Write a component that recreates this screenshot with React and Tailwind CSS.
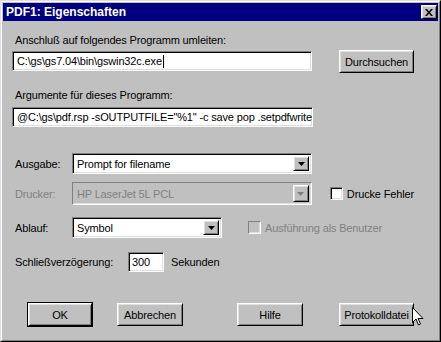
const sunken =
  "border border-t-[#808080] border-l-[#808080] border-r-white border-b-white shadow-[inset_1px_1px_0_#000,inset_-1px_-1px_0_#dfdfdf]";
const sunkenOff =
  "border border-t-[#808080] border-l-[#808080] border-r-white border-b-white shadow-[inset_1px_1px_0_#c0c0c0,inset_-1px_-1px_0_#dfdfdf]";
const raised =
  "border border-t-white border-l-white border-r-black border-b-black shadow-[inset_1px_1px_0_#dfdfdf,inset_-1px_-1px_0_#808080]";

function Arrow({ off }) {
  return (
    <div className={["h-full w-[16px] flex items-center justify-center bg-[#c0c0c0]", raised].join(" ")}>
      <svg width="7" height="4" viewBox="0 0 7 4">
        <path d="M0 0h7L3.5 4z" fill={off ? "#808080" : "#000"} />
      </svg>
    </div>
  );
}

function Select({ value, w, h, off }) {
  return (
    <div
      className={["flex items-stretch p-[2px]", off ? sunkenOff + " bg-[#c0c0c0]" : sunken + " bg-white", w, h].join(" ")}
    >
      <div className={["flex-1 flex items-center pl-[2px] whitespace-nowrap", off ? "text-[#808080]" : ""].join(" ")}>
        {value}
      </div>
      <Arrow off={off} />
    </div>
  );
}

function Check({ label, off }) {
  return (
    <div className="flex items-center whitespace-nowrap">
      <div className={["w-[13px] h-[13px]", off ? sunkenOff + " bg-[#c0c0c0]" : sunken + " bg-white"].join(" ")} />
      <span className={["ml-[4px]", off ? "text-[#808080]" : ""].join(" ")}>{label}</span>
    </div>
  );
}

function Btn({ children, w = "w-[66px]" }) {
  return (
    <div className={["h-[23px] flex items-center justify-center bg-[#c0c0c0]", raised, w].join(" ")}>
      {children}
    </div>
  );
}

export default function App() {
  return (
    <div className="relative w-[441px] h-[342px] overflow-hidden bg-[#c0c0c0] font-['Liberation_Sans',Arial,sans-serif] text-[11px] tracking-[-0.15px] leading-[14px] text-black border border-t-[#dfdfdf] border-l-[#dfdfdf] border-r-black border-b-black">
      <div className="h-full flex flex-col p-px border border-t-white border-l-white border-r-[#808080] border-b-[#808080]">
        {/* title bar */}
        <div className="h-[18px] bg-[#000080] flex items-center justify-between pl-[3px] pr-px">
          <span className="text-white font-bold text-[12px] tracking-normal leading-[16px]">PDF1: Eigenschaften</span>
          <div className={["w-[16px] h-[14px] flex items-center justify-center bg-[#c0c0c0]", raised].join(" ")}>
            <svg width="8" height="7" viewBox="0 0 8 7">
              <path d="M0 0h2l2 2.5L6 0h2L5 3.5 8 7H6L4 4.5 2 7H0l3-3.5z" fill="#000" />
            </svg>
          </div>
        </div>

        {/* body */}
        <div className="flex-1 flex flex-col pl-[9px] pr-[24px]">
          <div className="mt-[12px] ml-[3px]">Anschluß auf folgendes Programm umleiten:</div>
          <div className="mt-[3px] flex items-start">
            <div className={["mt-px h-[20px] w-[300px] bg-white flex items-center pl-[4px] whitespace-nowrap", sunken].join(" ")}>
              C:\gs\gs7.04\bin\gswin32c.exe
              <span className="ml-px w-px h-[13px] bg-black" />
            </div>
            <div className="ml-auto">
              <Btn w="w-[75px]">Durchsuchen</Btn>
            </div>
          </div>

          <div className="mt-[15px] ml-[3px]">Argumente für dieses Programm:</div>
          <div className={["mt-[5px] h-[20px] w-[301px] bg-white flex items-center pl-[4px] whitespace-nowrap overflow-hidden", sunken].join(" ")}>
            @C:\gs\pdf.rsp -sOUTPUTFILE="%1" -c save pop .setpdfwrite
          </div>

          <div className="mt-[26px] flex items-center">
            <span className="ml-[3px] w-[57px]">Ausgabe:</span>
            <Select value="Prompt for filename" w="w-[240px]" h="h-[21px]" />
          </div>

          <div className="mt-[8px] flex items-center">
            <span className="ml-[3px] w-[57px] text-[#808080]">Drucker:</span>
            <Select value="HP LaserJet 5L PCL" w="w-[240px]" h="h-[23px]" off />
            <div className="ml-[18px]">
              <Check label="Drucke Fehler" />
            </div>
          </div>

          <div className="mt-[12px] flex items-center">
            <span className="ml-[3px] w-[57px]">Ablauf:</span>
            <Select value="Symbol" w="w-[150px]" h="h-[21px]" />
            <div className="ml-[26px]">
              <Check label="Ausführung als Benutzer" off />
            </div>
          </div>

          <div className="mt-[14px] flex items-center">
            <span className="ml-[3px] w-[113px]">Schließverzögerung:</span>
            <div className={["h-[20px] w-[36px] bg-white flex items-center pl-[3px]", sunken].join(" ")}>300</div>
            <span className="ml-[7px]">Sekunden</span>
          </div>

          <div className="mt-[30px] flex items-center">
            <div className="ml-[15px] border border-black">
              <Btn w="w-[64px] h-[21px]">OK</Btn>
            </div>
            <div className="ml-[24px]">
              <Btn>Abbrechen</Btn>
            </div>
            <div className="ml-[54px]">
              <Btn>Hilfe</Btn>
            </div>
            <div className="ml-auto">
              <Btn w="w-[75px]">Protokolldatei</Btn>
            </div>
          </div>
        </div>
      </div>

      {/* mouse pointer */}
      <svg className="absolute left-[411px] top-[306px]" width="12" height="20" viewBox="0 0 12 20">
        <path
          d="M0.5 0.5v15l3.5-3.5 2.5 6 2-1-2.5-5.5h5z"
          fill="#fff"
          stroke="#000"
          strokeWidth="1"
          strokeLinejoin="miter"
        />
      </svg>
    </div>
  );
}
